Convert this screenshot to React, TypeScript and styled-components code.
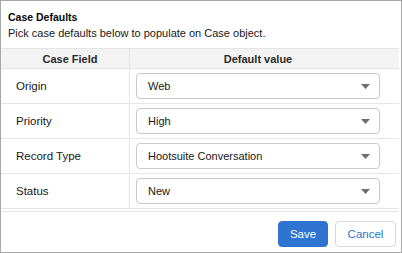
import React from 'react';
import styled, { createGlobalStyle } from 'styled-components';

interface FieldRow {
  label: string;
  value: string;
}

const rows: FieldRow[] = [
  { label: 'Origin', value: 'Web' },
  { label: 'Priority', value: 'High' },
  { label: 'Record Type', value: 'Hootsuite Conversation' },
  { label: 'Status', value: 'New' },
];

const GlobalStyle = createGlobalStyle`
  html, body {
    margin: 0;
    padding: 0;
    background: #ffffff;
  }
  body {
    font-family: 'Liberation Sans', Arial, sans-serif;
    color: #181818;
  }
  * {
    box-sizing: border-box;
  }
`;

const Arrow = () => (
  <svg width="9" height="5" viewBox="0 0 9 5">
    <path d="M0 0 H9 L4.5 5 Z" fill="#706e6b" />
  </svg>
);

const App = () => (
  <>
    <GlobalStyle />
    <Card>
      <Intro>
        <Title>Case Defaults</Title>
        <Subtitle>Pick case defaults below to populate on Case object.</Subtitle>
      </Intro>
      <Table>
        <HeaderRow>
          <HeaderCell>Case Field</HeaderCell>
          <HeaderCell value>Default value</HeaderCell>
        </HeaderRow>
        {rows.map((row) => (
          <Row key={row.label}>
            <LabelCell>{row.label}</LabelCell>
            <ValueCell>
              <Select>
                <span>{row.value}</span>
                <Arrow />
              </Select>
            </ValueCell>
          </Row>
        ))}
      </Table>
      <Footer>
        <Button primary>Save</Button>
        <Button>Cancel</Button>
      </Footer>
    </Card>
  </>
);

const Card = styled.div`
  width: 402px;
  height: 253px;
  border: 1.5px solid #a8a8a8;
  display: flex;
  flex-direction: column;
  background: #ffffff;
`;

const Intro = styled.div`
  padding: 8px 7px 7px;
`;

const Title = styled.div`
  font-size: 10.5px;
  font-weight: 700;
  line-height: 16px;
  color: #080707;
`;

const Subtitle = styled.div`
  font-size: 11px;
  line-height: 16px;
  color: #181818;
`;

const Table = styled.div`
  margin-right: 2px;
  border-top: 1px solid #e5e5e5;
`;

const HeaderRow = styled.div`
  display: grid;
  grid-template-columns: 128px 1fr;
  height: 20px;
  background: #f3f3f3;
  border-bottom: 1px solid #e5e5e5;
`;

const HeaderCell = styled.div<{ value?: boolean }>`
  display: flex;
  align-items: center;
  justify-content: center;
  padding-top: 1px;
  font-size: 11px;
  font-weight: 700;
  color: #2b2b2b;
  padding-left: ${({ value }) => (value ? '6px' : '10px')};
  padding-right: ${({ value }) => (value ? '19px' : '0')};
  border-left: ${({ value }) => (value ? '1px solid #e5e5e5' : 'none')};
`;

const Row = styled.div`
  display: grid;
  grid-template-columns: 128px 1fr;
  height: 35px;
  border-bottom: 1px solid #e5e5e5;
`;

const LabelCell = styled.div`
  display: flex;
  align-items: center;
  padding-left: 15px;
  font-size: 11.5px;
  color: #181818;
`;

const ValueCell = styled.div`
  display: flex;
  align-items: center;
  padding: 0 19px 0 6px;
  border-left: 1px solid #e5e5e5;
`;

const Select = styled.div`
  flex: 1;
  height: 26px;
  display: flex;
  align-items: center;
  justify-content: space-between;
  padding: 0 9px 0 11px;
  border: 1px solid #c9c9c9;
  border-radius: 4px;
  font-size: 11px;
  color: #181818;
  background: #ffffff;
`;

const Footer = styled.div`
  margin-top: 2px;
  margin-right: 2px;
  border-top: 1px solid #e5e5e5;
  display: flex;
  justify-content: flex-end;
  gap: 7px;
  padding: 9px 3px 0 0;
`;

const Button = styled.button<{ primary?: boolean }>`
  height: 26px;
  padding: 0;
  width: ${({ primary }) => (primary ? '50px' : '61px')};
  border-radius: 4px;
  font-family: 'Liberation Sans', Arial, sans-serif;
  font-size: 11.5px;
  border: 1px solid ${({ primary }) => (primary ? '#2e74d0' : '#d8d8d8')};
  background: ${({ primary }) => (primary ? '#2e74d0' : '#ffffff')};
  color: ${({ primary }) => (primary ? '#ffffff' : '#2e74d0')};
  cursor: pointer;
`;

export default App;
